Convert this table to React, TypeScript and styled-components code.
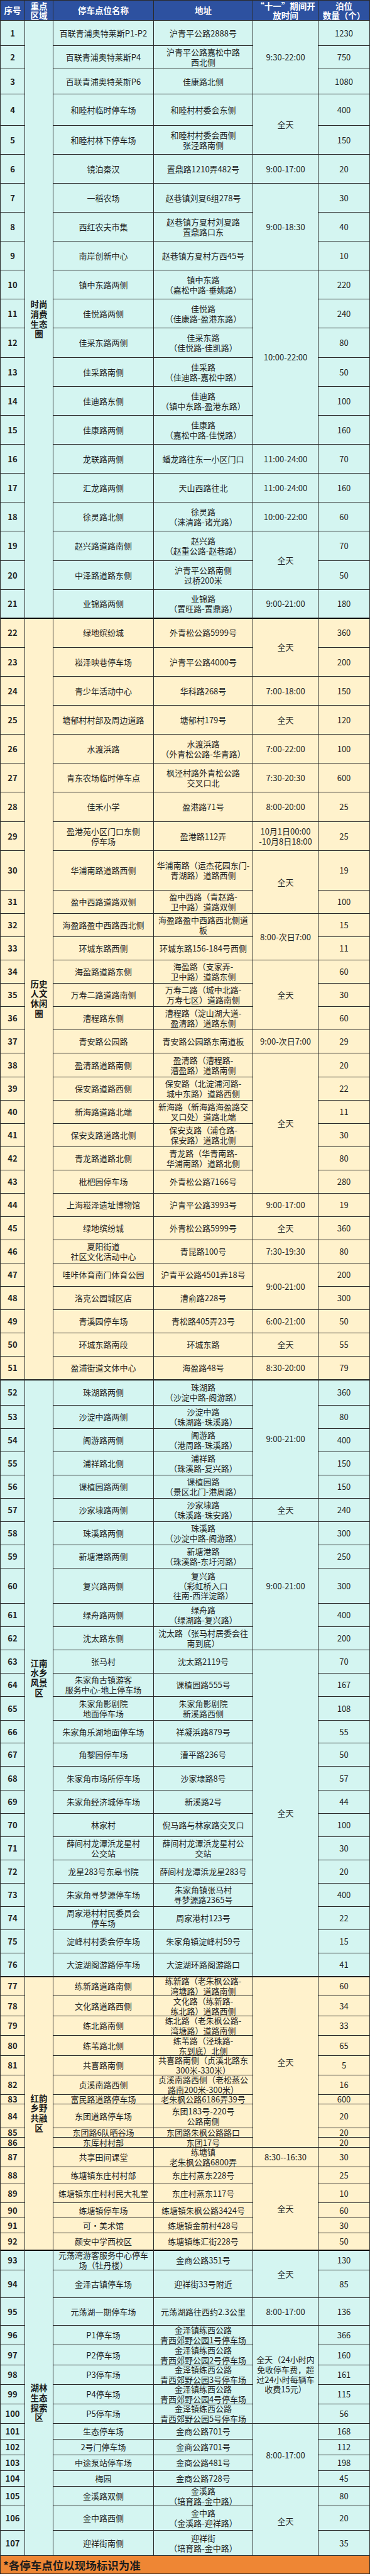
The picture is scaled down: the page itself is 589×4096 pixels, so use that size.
import styled, { createGlobalStyle } from "styled-components";

const GlobalStyle = createGlobalStyle`
  html, body {
    margin: 0;
    padding: 0;
    background: #ffffff;
  }
  body {
    font-family: "Noto Sans CJK SC", "Noto Sans", sans-serif;
  }
`;

const SCALE = 0.92;

// horizontal rule positions measured on the original sheet (px):
// top edge, header bottom, bottom of rows 1..107, footer bottom
const LINES = [
  0, 34.7, 78.3, 118.3, 161.7, 216, 266.7, 316.7, 366.7, 416.7, 466.7, 516.7,
  566.7, 617.3, 667.3, 717.3, 767.3, 817.7, 867.7, 917.7, 968.3, 1018.3, 1067.7,
  1118.3, 1168.3, 1218.3, 1268.7, 1319, 1369, 1419.3, 1469.3, 1538.3, 1578.3,
  1619, 1659, 1699.3, 1739.3, 1779.3, 1820, 1860.7, 1900.7, 1941, 1981.3, 2021.7,
  2061.7, 2102, 2142.3, 2182.3, 2223.3, 2263.3, 2303.3, 2344, 2383.7, 2428.3,
  2468.3, 2508.7, 2548.7, 2589, 2629.3, 2669.3, 2710, 2771, 2811, 2851.3, 2891.7,
  2932, 2972.3, 3012.3, 3052.7, 3093, 3133.3, 3173.7, 3214, 3254.3, 3294.3,
  3334.3, 3375, 3415, 3449.3, 3483.3, 3517.3, 3551.7, 3585.7, 3619.3, 3636,
  3676.7, 3693.3, 3711, 3745, 3774, 3806.7, 3832.3, 3858.3, 3888.3, 3923.3, 3971,
  4018.3, 4052.7, 4086.7, 4120.7, 4154.3, 4188.3, 4215.7, 4242.7, 4269.3, 4296.7,
  4330.7, 4373.3, 4416.7, 4448,
];

type Tone = "cyan" | "cream";

const TONES: Record<Tone, string> = {
  cyan: "#d4f5f1",
  cream: "#fff2cc",
};

// [name, address, bays]
const ROWS: [string, string, string][] = [
  ["百联青浦奥特莱斯P1-P2", "沪青平公路2888号", "1230"],
  ["百联青浦奥特莱斯P4", "沪青平公路嘉松中路\n西北侧", "750"],
  ["百联青浦奥特莱斯P6", "佳康路北侧", "1080"],
  ["和睦村临时停车场", "和睦村村委会东侧", "400"],
  ["和睦村林下停车场", "和睦村村委会西侧\n张泾路南侧", "150"],
  ["镜泊秦汉", "置鼎路1210弄482号", "20"],
  ["一稻农场", "赵巷镇刘夏6组278号", "30"],
  ["西红农夫市集", "赵巷镇方夏村刘夏路\n置鼎路口东", "40"],
  ["南岸创新中心", "赵巷镇方夏村方西45号", "10"],
  ["镇中东路两侧", "镇中东路\n（嘉松中路-垂姚路）", "220"],
  ["佳悦路两侧", "佳悦路\n（佳康路-盈港东路）", "240"],
  ["佳采东路两侧", "佳采东路\n（佳悦路-佳凯路）", "80"],
  ["佳采路南侧", "佳采路\n（佳迪路-嘉松中路）", "50"],
  ["佳迪路东侧", "佳迪路\n（镇中东路-盈港东路）", "100"],
  ["佳康路两侧", "佳康路\n（嘉松中路-佳悦路）", "160"],
  ["龙联路两侧", "蟠龙路往东一小区门口", "70"],
  ["汇龙路两侧", "天山西路往北", "160"],
  ["徐灵路北侧", "徐灵路\n（涞清路-诸光路）", "60"],
  ["赵兴路道路南侧", "赵兴路\n（赵重公路-赵巷路）", "70"],
  ["中泽路道路东侧", "沪青平公路南侧\n过桥200米", "50"],
  ["业锦路两侧", "业锦路\n（置旺路-置鼎路）", "180"],
  ["绿地缤纷城", "外青松公路5999号", "360"],
  ["崧泽映巷停车场", "沪青平公路4000号", "200"],
  ["青少年活动中心", "华科路268号", "150"],
  ["塘郁村村部及周边道路", "塘郁村179号", "120"],
  ["水渡浜路", "水渡浜路\n（外青松公路-华青路）", "100"],
  ["青东农场临时停车点", "枫泾村路外青松公路\n交叉口北", "600"],
  ["佳禾小学", "盈港路71号", "25"],
  ["盈港苑小区门口东侧\n停车场", "盈港路112弄", "25"],
  ["华浦南路道路西侧", "华浦南路（运杰花园东门-\n青湖路）道路西侧", "19"],
  ["盈中西路道路双侧", "盈中西路（青赵路-\n卫中路）道路双侧", "100"],
  ["海盈路盈中西路西北侧", "海盈路盈中西路西北侧道\n板", "15"],
  ["环城东路西侧", "环城东路156-184号西侧", "11"],
  ["海盈路道路东侧", "海盈路（支家弄-\n卫中路）道路东侧", "60"],
  ["万寿二路道路南侧", "万寿二路（城中北路-\n万寿七区）道路南侧", "30"],
  ["漕程路东侧", "漕程路（淀山湖大道-\n盈清路）道路东侧", "60"],
  ["青安路公园路", "青安路公园路东南道板", "29"],
  ["盈清路道路南侧", "盈清路（漕程路-\n漕盈路）道路南侧", "20"],
  ["保安路道路西侧", "保安路（北淀浦河路-\n城中东路）道路西侧", "22"],
  ["新海路道路北端", "新海路（新海路海盈路交\n叉口处）道路北端", "11"],
  ["保安支路道路北侧", "保安支路（浦仓路-\n保安路）道路北侧", "30"],
  ["青龙路道路北侧", "青龙路（华青南路-\n华浦南路）道路北侧", "80"],
  ["枇杷园停车场", "外青松公路7166号", "280"],
  ["上海崧泽遗址博物馆", "沪青平公路3993号", "19"],
  ["绿地缤纷城", "外青松公路5999号", "360"],
  ["夏阳街道\n社区文化活动中心", "青昆路100号", "80"],
  ["哇咔体育南门体育公园", "沪青平公路4501弄18号", "200"],
  ["洛克公园城区店", "漕俞路228号", "300"],
  ["青溪园停车场", "青松路405弄23号", "50"],
  ["环城东路南段", "环城东路", "55"],
  ["盈浦街道文体中心", "海盈路48号", "79"],
  ["珠湖路两侧", "珠湖路\n（沙淀中路-阁游路）", "360"],
  ["沙淀中路两侧", "沙淀中路\n（珠湖路-珠溪路）", "80"],
  ["阁游路两侧", "阁游路\n（港周路-珠溪路）", "400"],
  ["浦祥路北侧", "浦祥路\n（珠溪路-复兴路）", "150"],
  ["课植园路两侧", "课植园路\n（景区北门-港周路）", "150"],
  ["沙家埭路两侧", "沙家埭路\n（珠溪路-珠安路）", "240"],
  ["珠溪路两侧", "珠溪路\n（沙淀中路-阁游路）", "300"],
  ["新塘港路两侧", "新塘港路\n（珠溪路-东圩河路）", "250"],
  ["复兴路两侧", "复兴路\n（彩虹桥入口\n往南-西洋淀路）", "300"],
  ["绿舟路两侧", "绿舟路\n（绿湖路-复兴路）", "400"],
  ["沈太路东侧", "沈太路（张马村居委会往\n南到底）", "200"],
  ["张马村", "沈太路2119号", "70"],
  ["朱家角古镇游客\n服务中心-地上停车场", "课植园路555号", "167"],
  ["朱家角影剧院\n地面停车场", "朱家角影剧院\n新溪路西侧", "108"],
  ["朱家角乐湖地面停车场", "祥凝浜路879号", "55"],
  ["角黎园停车场", "漕平路236号", "50"],
  ["朱家角市场所停车场", "沙家埭路8号", "57"],
  ["朱家角经济城停车场", "新溪路2号", "44"],
  ["林家村", "倪马路与林家路交叉口", "100"],
  ["薛间村龙潭浜龙星村\n公交站", "薛间村龙潭浜龙星村公\n交站", "30"],
  ["龙星283号东皋书院", "薛间村龙潭浜龙星283号", "20"],
  ["朱家角寻梦源停车场", "朱家角镇张马村\n寻梦源路2365号", "400"],
  ["周家港村村民委员会\n停车场", "周家港村123号", "22"],
  ["淀峰村村委会停车场", "朱家角镇淀峰村59号", "15"],
  ["大淀湖阁游路停车场", "大淀湖环路阁游路口", "41"],
  ["练新路道路南侧", "练新路（老朱枫公路-\n湾塘路）道路南侧", "60"],
  ["文化路道路西侧", "文化路（练新路-\n练北路）道路西侧", "34"],
  ["练北路南侧", "练北路（老朱枫公路-\n湾塘路）道路南侧", "33"],
  ["练苇路北侧", "练苇路（泾珠路-\n东到底）北侧", "65"],
  ["共喜路南侧", "共喜路南侧（贞溪北路东\n300米-330米）", "5"],
  ["贞溪南路西侧", "贞溪南路西侧（老松蒸公\n路南200米-300米）", "16"],
  ["富民路道路停车场", "老朱枫公路6186弄39号", "600"],
  ["东团道路停车场", "东团183号-220号\n公路南侧", "20"],
  ["东团路6队晒谷场", "东团路朱枫公路路口", "20"],
  ["东厍村村部", "东团17号", "20"],
  ["共享田间课堂", "练塘镇\n老朱枫公路6800弄", "30"],
  ["练塘镇东庄村村部", "东庄村蒸东228号", "25"],
  ["练塘镇东庄村村民大礼堂", "东庄村蒸东117号", "10"],
  ["练塘镇停车场", "练塘镇朱枫公路3424号", "60"],
  ["可•美术馆", "练塘镇金前村428号", "30"],
  ["颜安中学西校区", "练塘镇练汇街228号", "50"],
  ["元荡湾游客服务中心停车\n场（牡丹楼）", "金商公路351号", "130"],
  ["金泽古镇停车场", "迎祥街33号附近", "85"],
  ["元荡湖一期停车场", "元荡湖路往西约2.3公里", "136"],
  ["P1停车场", "金泽镇练西公路\n青西郊野公园1号停车场", "366"],
  ["P2停车场", "金泽镇练西公路\n青西郊野公园2号停车场", "160"],
  ["P3停车场", "金泽镇练西公路\n青西郊野公园3号停车场", "161"],
  ["P4停车场", "金泽镇练西公路\n青西郊野公园4号停车场", "115"],
  ["P5停车场", "金泽镇练西公路\n青西郊野公园5号停车场", "56"],
  ["生态停车场", "金商公路701号", "168"],
  ["2号门停车场", "金商公路701号", "112"],
  ["中途泵站停车场", "金商公路481号", "198"],
  ["梅园", "金商公路728号", "45"],
  ["金溪路双侧", "金溪路\n（培育路-金中路）", "80"],
  ["金中路西侧", "金中路\n（金溪路-迎祥路）", "20"],
  ["迎祥街南侧", "迎祥街\n（培育路-金中路）", "35"],
];

// [first row, rows spanned, opening hours]
const HOURS: [number, number, string][] = [
  [1, 3, "9:30-22:00"],
  [4, 2, "全天"],
  [6, 1, "9:00-17:00"],
  [7, 3, "9:00-18:30"],
  [10, 6, "10:00-22:00"],
  [16, 1, "11:00-24:00"],
  [17, 1, "11:00-24:00"],
  [18, 1, "10:00-22:00"],
  [19, 2, "全天"],
  [21, 1, "9:00-21:00"],
  [22, 2, "全天"],
  [24, 1, "7:00-18:00"],
  [25, 1, "全天"],
  [26, 1, "7:00-22:00"],
  [27, 1, "7:30-20:30"],
  [28, 1, "8:00-20:00"],
  [29, 1, "10月1日00:00\n-10月8日18:00"],
  [30, 2, "全天"],
  [32, 2, "8:00-次日7:00"],
  [34, 3, "全天"],
  [37, 1, "9:00-次日7:00"],
  [38, 6, "全天"],
  [44, 1, "9:00-17:00"],
  [45, 1, "全天"],
  [46, 1, "7:30-19:30"],
  [47, 2, "9:00-21:00"],
  [49, 1, "6:00-21:00"],
  [50, 1, "全天"],
  [51, 1, "8:30-20:00"],
  [52, 5, "9:00-21:00"],
  [57, 1, "全天"],
  [58, 5, "9:00-21:00"],
  [63, 14, "全天"],
  [77, 10, "全天"],
  [87, 1, "8:30--16:30"],
  [88, 5, "全天"],
  [93, 2, "全天"],
  [95, 1, "8:00-17:00"],
  [96, 5, "全天（24小时内\n免收停车费，超\n过24小时每辆车\n收费15元）"],
  [101, 4, "8:00-17:00"],
  [105, 3, "全天"],
];

// [first row, rows spanned, area label, tone]
const AREAS: [number, number, string, Tone][] = [
  [1, 21, "时尚消费生态圈", "cyan"],
  [22, 30, "历史人文休闲圈", "cream"],
  [52, 25, "江南水乡风景区", "cyan"],
  [77, 16, "红韵乡野共融区", "cream"],
  [93, 15, "湖林生态探索区", "cyan"],
];

const Sheet = styled.div<{ $rows: string }>`
  display: grid;
  grid-template-columns: 38px 44px 159px 157px 103px 81px;
  grid-template-rows: ${(p) => p.$rows};
  gap: 1px;
  padding: 1px;
  width: 589px;
  box-sizing: border-box;
  background: #2a2a2a;
`;

const Cell = styled.div<{ $row: number; $span?: number; $col: number; $bg?: string; $edge?: boolean }>`
  grid-row: ${(p) => p.$row} / span ${(p) => p.$span ?? 1};
  grid-column: ${(p) => p.$col};
  display: flex;
  align-items: center;
  justify-content: center;
  text-align: center;
  white-space: pre-line;
  padding: 0 2px;
  background: ${(p) => p.$bg ?? "#fff"};
  box-shadow: ${(p) => (p.$edge ? "inset 0 1px 0 #000" : "none")};
  color: #1f1f1f;
  font-size: 13px;
  line-height: 1.2;
`;

const HeadCell = styled(Cell)`
  background: #2d51a0;
  color: #ffffff;
  font-size: 13.5px;
  font-weight: 700;
  line-height: 1.1;
`;

const NumCell = styled(Cell)`
  font-weight: 600;
`;

const AreaCell = styled(Cell)`
  font-size: 13.5px;
  font-weight: 700;
  line-height: 1.15;
  color: #1a1a1a;
`;

const Footer = styled.div<{ $row: number }>`
  grid-row: ${(p) => p.$row};
  grid-column: 1 / -1;
  display: flex;
  align-items: center;
  padding-left: 4px;
  background: #ee8634;
  color: #1c1c1c;
  font-size: 17.5px;
  font-weight: 600;
`;

const trackSizes = () => {
  const px = LINES.map((v) => Math.round(v * SCALE));
  const tracks: string[] = [];
  for (let k = 1; k < px.length; k++) tracks.push(`${px[k] - px[k - 1] - 1}px`);
  return tracks.join(" ");
};

const pairUp = (label: string) => (label.match(/.{1,2}/g) ?? []).join("\n");

const EDGES = new Set(AREAS.slice(1).map((a) => a[0]));

export default function App() {
  const cells: React.ReactNode[] = [];

  ROWS.forEach(([name, addr, bays], i) => {
    const n = i + 1;
    const row = n + 1;
    const area = AREAS.find((a) => n >= a[0] && n < a[0] + a[1])!;
    const bg = TONES[area[3]];
    const edge = EDGES.has(n);

    cells.push(
      <NumCell key={`n${n}`} $row={row} $col={1} $bg={bg} $edge={edge}>
        {n}
      </NumCell>
    );
    if (area[0] === n) {
      cells.push(
        <AreaCell key={`a${n}`} $row={row} $span={area[1]} $col={2} $bg={bg} $edge={edge}>
          {pairUp(area[2])}
        </AreaCell>
      );
    }
    cells.push(
      <Cell key={`m${n}`} $row={row} $col={3} $bg={bg} $edge={edge}>
        {name}
      </Cell>,
      <Cell key={`d${n}`} $row={row} $col={4} $bg={bg} $edge={edge}>
        {addr}
      </Cell>
    );
    const hours = HOURS.find((h) => h[0] === n);
    if (hours) {
      cells.push(
        <Cell key={`h${n}`} $row={row} $span={hours[1]} $col={5} $bg={bg} $edge={edge}>
          {hours[2]}
        </Cell>
      );
    }
    cells.push(
      <Cell key={`b${n}`} $row={row} $col={6} $bg={bg} $edge={edge}>
        {bays}
      </Cell>
    );
  });

  return (
    <>
      <GlobalStyle />
      <Sheet $rows={trackSizes()}>
        <HeadCell $row={1} $col={1}>序号</HeadCell>
        <HeadCell $row={1} $col={2}>{"重点\n区域"}</HeadCell>
        <HeadCell $row={1} $col={3}>停车点位名称</HeadCell>
        <HeadCell $row={1} $col={4}>地址</HeadCell>
        <HeadCell $row={1} $col={5}>{"“十一”期间开\n放时间"}</HeadCell>
        <HeadCell $row={1} $col={6}>{"泊位\n数量（个）"}</HeadCell>
        {cells}
        <Footer $row={ROWS.length + 2}>*各停车点位以现场标识为准</Footer>
      </Sheet>
    </>
  );
}
